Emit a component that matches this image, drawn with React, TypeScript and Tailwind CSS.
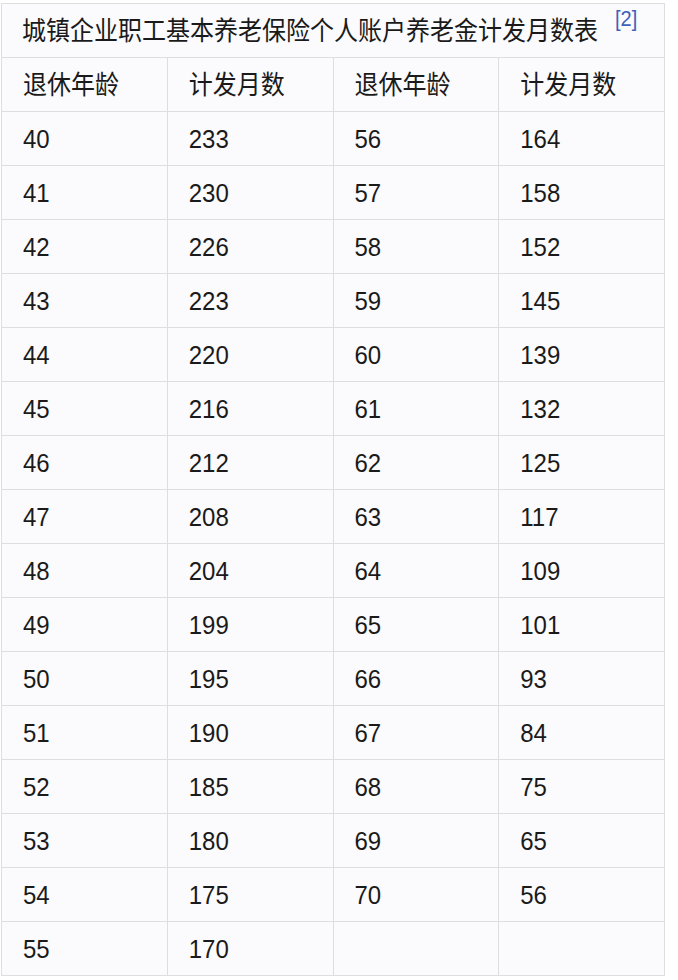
import React from "react"

const rows: [string, string, string, string][] = [
  ["40", "233", "56", "164"],
  ["41", "230", "57", "158"],
  ["42", "226", "58", "152"],
  ["43", "223", "59", "145"],
  ["44", "220", "60", "139"],
  ["45", "216", "61", "132"],
  ["46", "212", "62", "125"],
  ["47", "208", "63", "117"],
  ["48", "204", "64", "109"],
  ["49", "199", "65", "101"],
  ["50", "195", "66", "93"],
  ["51", "190", "67", "84"],
  ["52", "185", "68", "75"],
  ["53", "180", "69", "65"],
  ["54", "175", "70", "56"],
  ["55", "170", "", ""],
]

const font = { fontFamily: '"Liberation Sans", "Noto Sans CJK SC", sans-serif' }

export default function App() {
  return (
    <div className="w-[678px] h-[980px] bg-white pt-[3px] pl-[1px]" style={font}>
      <table className="w-[664px] border-collapse bg-[#fbfafc] text-[#1a1a1a] table-fixed">
        <thead>
          <tr>
            <th
              colSpan={4}
              className="h-[54px] border border-[#dedde2] pl-[20px] text-left text-[24px] font-normal"
            >
              <span className="inline-block scale-y-110">城镇企业职工基本养老保险个人账户养老金计发月数表</span>
              <span className="inline-block ml-[17px] text-[20px] leading-none text-[#3b63b8] scale-y-110 relative top-[-14px]">
                [2]
              </span>
            </th>
          </tr>
          <tr>
            {["退休年龄", "计发月数", "退休年龄", "计发月数"].map((h, i) => (
              <th
                key={i}
                className="h-[54px] w-[166px] border border-[#dedde2] pl-[21px] text-left text-[24px] font-normal"
              >
                <span className="inline-block scale-y-110">{h}</span>
              </th>
            ))}
          </tr>
        </thead>
        <tbody>
          {rows.map((r, i) => (
            <tr key={i}>
              {r.map((c, j) => (
                <td
                  key={j}
                  className="h-[54px] border border-[#dedde2] pl-[21px] text-left text-[24px]"
                >
                  <span className="inline-block scale-y-110">{c}</span>
                </td>
              ))}
            </tr>
          ))}
        </tbody>
      </table>
    </div>
  )
}
